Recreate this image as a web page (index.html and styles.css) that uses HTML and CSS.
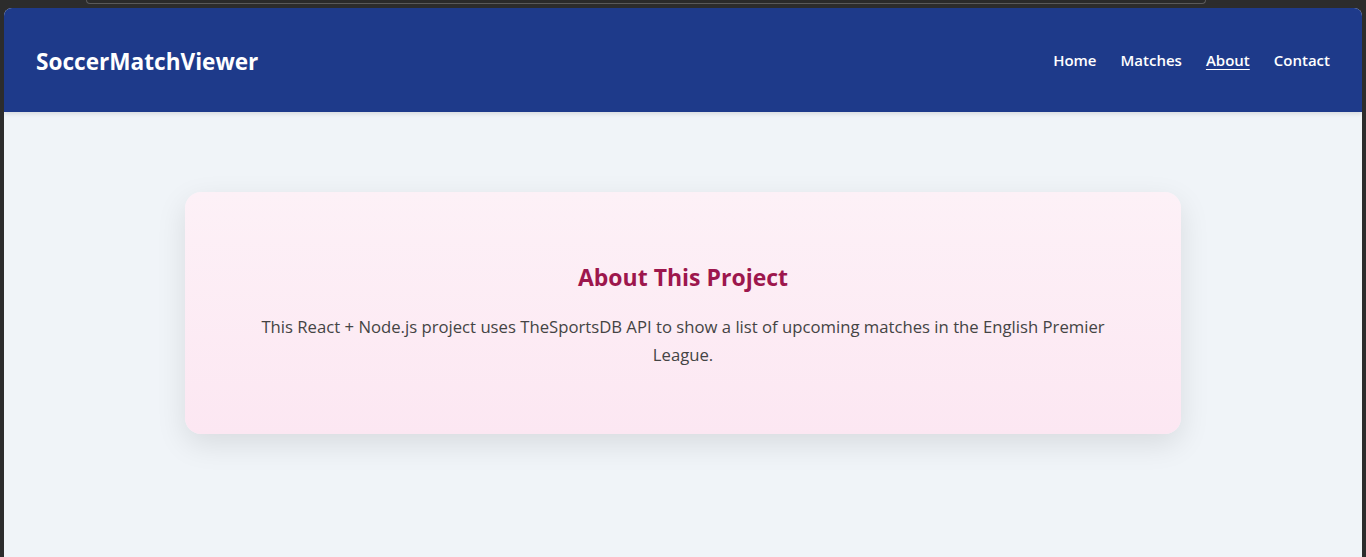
FILE: index.html
```html
<!DOCTYPE html>
<html lang="en">
<head>
<meta charset="utf-8">
<title>SoccerMatchViewer</title>
<link rel="stylesheet" href="styles.css">
</head>
<body>
<div class="chrome"><div class="chrome-tab"></div></div>
<div class="app">
  <header class="header">
    <div class="logo">SoccerMatchViewer</div>
    <nav class="nav">
      <a href="#">Home</a>
      <a href="#">Matches</a>
      <a href="#" class="active">About</a>
      <a href="#">Contact</a>
    </nav>
  </header>
  <main class="main">
    <section class="card">
      <h2 class="card-title">About This Project</h2>
      <p class="card-text">This React + Node.js project uses TheSportsDB API to show a list of upcoming matches in the English Premier League.</p>
    </section>
  </main>
</div>
</body>
</html>
```
FILE: styles.css
```css
html, body {
  margin: 0;
  height: 100%;
}
body {
  background: #2c2c2c;
  padding: 0 4px;
  box-sizing: border-box;
  display: flex;
  flex-direction: column;
  font-family: "Open Sans", "Noto Sans", sans-serif;
}
.chrome {
  height: 8px;
  flex: none;
}
.chrome-tab {
  margin-left: 82px;
  width: 1118px;
  height: 3px;
  border: 1px solid #5a5a5a;
  border-top: none;
  border-radius: 0 0 8px 8px;
  background: #2a2a2a;
}
.app {
  flex: 1;
  display: flex;
  flex-direction: column;
  background: #f0f4f8;
  border-radius: 8px 8px 0 0;
  overflow: hidden;
}
.header {
  height: 104px;
  flex: none;
  background: #1e3a8a;
  display: flex;
  align-items: center;
  justify-content: space-between;
  padding: 0 32px;
  box-shadow: 0 2px 4px rgba(0,0,0,0.1);
}
.logo {
  color: #fff;
  font-weight: 700;
  font-size: 22.6px;
  margin-top: 2px;
}
.nav {
  display: flex;
  gap: 24px;
}
.nav a {
  color: #fff;
  text-decoration: none;
  font-weight: 600;
  font-size: 15px;
}
.nav a.active {
  text-decoration: underline;
  text-underline-offset: 3px;
}
.main {
  flex: 1;
  padding: 80px 16px 0;
  display: flex;
  justify-content: center;
  align-items: flex-start;
}
.card {
  width: 996px;
  box-sizing: border-box;
  padding: 68px 48px 65px;
  border-radius: 16px;
  background: linear-gradient(180deg, #fdf1f7 0%, #fce7f2 100%);
  box-shadow: 0 10px 30px rgba(0,0,0,0.1);
  text-align: center;
}
.card-title {
  margin: 0 0 19px;
  color: #9d174d;
  font-size: 23px;
  font-weight: 700;
  line-height: 34px;
}
.card-text {
  margin: 0 auto;
  color: #444;
  font-size: 16.7px;
  line-height: 28px;
  max-width: 880px;
}
```
